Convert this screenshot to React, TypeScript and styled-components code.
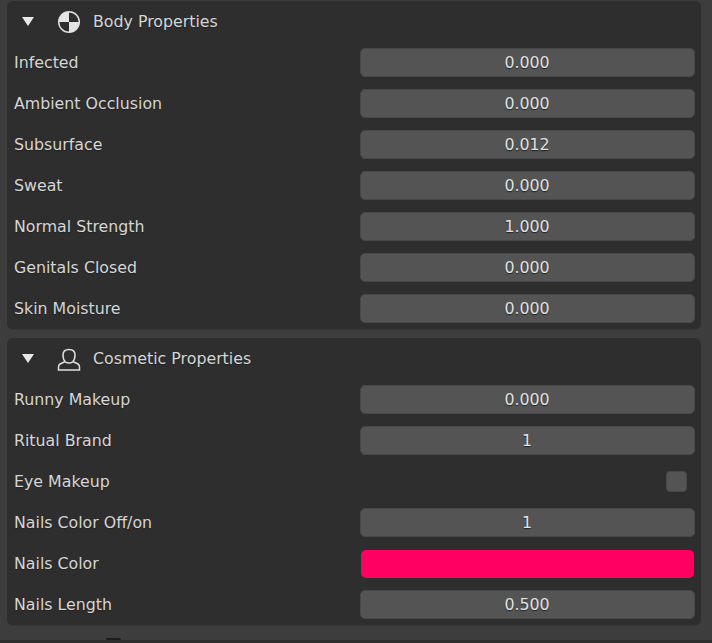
import React from "react";
import styled, { createGlobalStyle } from "styled-components";

const Global = createGlobalStyle`
  html, body { margin: 0; padding: 0; background: #3d3d3d; }
  body { font-family: "DejaVu Sans", sans-serif; }
`;

const Page = styled.div`
  width: 712px;
  height: 643px;
  overflow: hidden;
  box-sizing: border-box;
  padding: 1px 11px 0 7px;
  display: flex;
  flex-direction: column;
  gap: 9px;
  background: #3d3d3d;
  position: relative;
`;

const Panel = styled.section`
  background: #2e2e2e;
  border-radius: 6px;
  box-shadow: 0 1px 0 #363636;
  padding-bottom: 6px;
`;

const Header = styled.header`
  height: 41px;
  display: flex;
  align-items: center;
  color: #d6d6d6;
  font-size: 15.8px;
  line-height: 20px;
  text-shadow: 0 1px 1px #222;
`;

const Arrow = styled.span`
  width: 0;
  height: 0;
  margin-left: 14.5px;
  border-left: 6.5px solid transparent;
  border-right: 6.5px solid transparent;
  border-top: 9px solid #e8e8e8;
`;

const IconSlot = styled.span`
  width: 24px;
  height: 24px;
  margin-left: 23.5px;
  margin-right: 12px;
  display: flex;
  align-items: center;
  justify-content: center;
`;

const Rows = styled.div`
  display: flex;
  flex-direction: column;
  gap: 12px;
  padding: 6px 6px 0 7px;
`;

const Row = styled.div`
  display: grid;
  grid-template-columns: 346px 335px;
  height: 29px;
  align-items: center;
  font-size: 15.8px;
  color: #d6d6d6;
  text-shadow: 0 1px 1px #222;
`;

const Label = styled.span`
  white-space: nowrap;
  margin-top: -1px;
`;

const NumberField = styled.div`
  height: 29px;
  box-sizing: border-box;
  padding-right: 1px;
  background: #545454;
  border: 1px solid #484848;
  border-radius: 5px;
  display: flex;
  align-items: center;
  justify-content: center;
  color: #e2e2e2;
`;

const Swatch = styled.div<{ $color: string }>`
  height: 28px;
  margin: 0 1px;
  border-radius: 5px;
  background: ${(p) => p.$color};
`;

const CheckWrap = styled.div`
  display: flex;
  justify-content: flex-end;
  padding-right: 8px;
`;

const Check = styled.div`
  width: 21px;
  height: 21px;
  box-sizing: border-box;
  border-radius: 4px;
  background: #545454;
  border: 1px solid #484848;
`;

const FooterMark = styled.div`
  position: absolute;
  left: 0;
  right: 0;
  bottom: 0;
  height: 3px;
  background: #2e2e2e;

  &::before {
    content: "";
    position: absolute;
    left: 106px;
    top: -2px;
    width: 15px;
    height: 2px;
    border-radius: 1px;
    background: #1c1c1c;
  }
`;

const BodyIcon = () => (
  <svg width="24" height="24" viewBox="0 0 24 24">
    <circle cx="12" cy="12" r="11" fill="#e4e4e4" />
    <path d="M12 2.4A9.6 9.6 0 0 1 21.6 12H12V21.6A9.6 9.6 0 0 1 2.4 12H12Z" fill="#2e2e2e" />
  </svg>
);

const PersonIcon = () => (
  <svg width="24" height="24" viewBox="0 0 24 24" fill="none" stroke="#dedede" strokeWidth="1.5">
    <path d="M8.2 14.5C6.5 13 6 10.5 6 8C6 4.5 8.5 2.5 12 2.5C15.5 2.5 18 4.5 18 8C18 10.5 17.5 13 15.8 14.5" />
    <path d="M8.2 14.5C9 16.5 15 16.5 15.8 14.5" />
    <path d="M8.2 14.5L3 17C2 17.6 1.5 18.5 1.5 20V23H22.5V20C22.5 18.5 22 17.6 21 17L15.8 14.5" />
  </svg>
);

type Item = { label: string; value?: string; kind?: "check" | "color" };

const body: Item[] = [
  { label: "Infected", value: "0.000" },
  { label: "Ambient Occlusion", value: "0.000" },
  { label: "Subsurface", value: "0.012" },
  { label: "Sweat", value: "0.000" },
  { label: "Normal Strength", value: "1.000" },
  { label: "Genitals Closed", value: "0.000" },
  { label: "Skin Moisture", value: "0.000" },
];

const cosmetic: Item[] = [
  { label: "Runny Makeup", value: "0.000" },
  { label: "Ritual Brand", value: "1" },
  { label: "Eye Makeup", kind: "check" },
  { label: "Nails Color Off/on", value: "1" },
  { label: "Nails Color", kind: "color" },
  { label: "Nails Length", value: "0.500" },
];

const PropertyRow = ({ item }: { item: Item }) => (
  <Row>
    <Label>{item.label}</Label>
    {item.kind === "check" ? (
      <CheckWrap><Check /></CheckWrap>
    ) : item.kind === "color" ? (
      <Swatch $color="#ff0062" />
    ) : (
      <NumberField>{item.value}</NumberField>
    )}
  </Row>
);

const PropertyPanel = ({ title, icon, items }: { title: string; icon: React.ReactNode; items: Item[] }) => (
  <Panel>
    <Header>
      <Arrow />
      <IconSlot>{icon}</IconSlot>
      {title}
    </Header>
    <Rows>
      {items.map((item) => (
        <PropertyRow key={item.label} item={item} />
      ))}
    </Rows>
  </Panel>
);

export default function App() {
  return (
    <Page>
      <Global />
      <PropertyPanel title="Body Properties" icon={<BodyIcon />} items={body} />
      <PropertyPanel title="Cosmetic Properties" icon={<PersonIcon />} items={cosmetic} />
      <FooterMark />
    </Page>
  );
}
